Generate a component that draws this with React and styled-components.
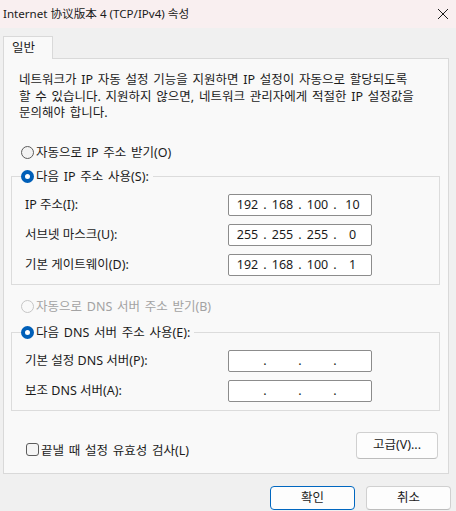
import React from 'react';
import styled, { createGlobalStyle } from 'styled-components';

const GlobalStyle = createGlobalStyle`
  html, body {
    margin: 0;
    padding: 0;
    background: #f0f0f0;
  }
  body {
    font-family: 'Noto Sans', 'Noto Sans CJK KR', 'Noto Sans CJK SC', sans-serif;
    font-size: 12.5px;
    color: #1b1b1b;
  }
`;

const ipRows = [
  { label: 'IP 주소(I):', value: ['192', '168', '100', '10'] },
  { label: '서브넷 마스크(U):', value: ['255', '255', '255', '0'] },
  { label: '기본 게이트웨이(D):', value: ['192', '168', '100', '1'] },
];

const dnsRows = [
  { label: '기본 설정 DNS 서버(P):', value: ['', '', '', ''] },
  { label: '보조 DNS 서버(A):', value: ['', '', '', ''] },
];

function IpField({ value }) {
  return (
    <IpBox>
      {value.map((octet, i) => (
        <React.Fragment key={i}>
          <Octet>{octet}</Octet>
          {i < 3 && <Dot>.</Dot>}
        </React.Fragment>
      ))}
    </IpBox>
  );
}

function Radio({ checked, disabled, children }) {
  return (
    <RadioRow $disabled={disabled}>
      <RadioDot $checked={checked} $disabled={disabled} />
      <span>{children}</span>
    </RadioRow>
  );
}

export default function App() {
  return (
    <>
      <GlobalStyle />
      <Window>
        <TitleBar>
          <Title>Internet 协议版本 4 (TCP/IPv4) 속성</Title>
          <CloseIcon width="12" height="12" viewBox="0 0 12 12">
            <path d="M1 1 L11 11 M11 1 L1 11" stroke="#1b1b1b" strokeWidth="1" fill="none" />
          </CloseIcon>
        </TitleBar>

        <Body>
          <Tab>일반</Tab>
          <Panel>
            <Description>
              네트워크가 IP 자동 설정 기능을 지원하면 IP 설정이 자동으로 할당되도록
              <br />
              할 수 있습니다. 지원하지 않으면, 네트워크 관리자에게 적절한 IP 설정값을
              <br />
              문의해야 합니다.
            </Description>

            <Standalone $top={23}>
              <Radio>자동으로 IP 주소 받기(O)</Radio>
            </Standalone>

            <Group $top={8}>
              <Legend>
                <Radio checked>다음 IP 주소 사용(S):</Radio>
              </Legend>
              <Rows>
                {ipRows.map(row => (
                  <FieldRow key={row.label}>
                    <FieldLabel>{row.label}</FieldLabel>
                    <IpField value={row.value} />
                  </FieldRow>
                ))}
              </Rows>
            </Group>

            <Standalone $top={14}>
              <Radio disabled>자동으로 DNS 서버 주소 받기(B)</Radio>
            </Standalone>

            <Group $top={10}>
              <Legend>
                <Radio checked>다음 DNS 서버 주소 사용(E):</Radio>
              </Legend>
              <Rows>
                {dnsRows.map(row => (
                  <FieldRow key={row.label}>
                    <FieldLabel>{row.label}</FieldLabel>
                    <IpField value={row.value} />
                  </FieldRow>
                ))}
              </Rows>
            </Group>

            <BottomRow>
              <CheckRow>
                <CheckBox />
                <span>끝낼 때 설정 유효성 검사(L)</span>
              </CheckRow>
              <Button $w={82} $h={27}>고급(V)...</Button>
            </BottomRow>
          </Panel>

          <Footer>
            <Button $w={85} $h={24} $primary>확인</Button>
            <Button $w={85} $h={24}>취소</Button>
          </Footer>
        </Body>
      </Window>
    </>
  );
}

const Window = styled.div`
  width: 456px;
  height: 511px;
  background: #f0f0f0;
  display: flex;
  flex-direction: column;
  overflow: hidden;
`;

const TitleBar = styled.div`
  height: 28px;
  background: #f9eff0;
  display: flex;
  align-items: center;
  justify-content: space-between;
  padding: 0 7px 0 3px;
  box-sizing: border-box;
`;

const Title = styled.div`
  font-size: 11.6px;
  line-height: 16px;
  color: #1b1b1b;
  white-space: nowrap;
`;

const CloseIcon = styled.svg`
  display: block;
  margin-top: -1px;
`;

const Body = styled.div`
  padding: 8px 0 0 3px;
`;

const Tab = styled.div`
  position: relative;
  z-index: 1;
  width: 50px;
  height: 23px;
  margin-bottom: -1px;
  box-sizing: border-box;
  border: 1px solid #d9d9d9;
  border-bottom: none;
  background: #f9f9f9;
  padding: 3px 0 0 8px;
  line-height: 16px;
`;

const Panel = styled.div`
  width: 446px;
  box-sizing: border-box;
  border: 1px solid #d9d9d9;
  background: #f9f9f9;
  padding: 13px 8px 14px 7px;
`;

const Description = styled.div`
  padding-left: 8px;
  line-height: 16.5px;
  word-spacing: 1.5px;
  white-space: nowrap;
`;

const Standalone = styled.div`
  margin-top: ${p => p.$top}px;
  padding-left: 10px;
`;

const RadioRow = styled.div`
  display: flex;
  align-items: center;
  gap: 2px;
  height: 16px;
  line-height: 16px;
  word-spacing: 1.5px;
  white-space: nowrap;
  color: ${p => (p.$disabled ? '#a3a3a3' : '#1b1b1b')};
`;

const RadioDot = styled.span`
  width: 13px;
  height: 13px;
  box-sizing: border-box;
  border-radius: 50%;
  flex: none;
  border: ${p =>
    p.$checked ? '4px solid #005fb8' : `1px solid ${p.$disabled ? '#c6c6c6' : '#5c5c5c'}`};
  background: ${p => (p.$checked ? '#ffffff' : p.$disabled ? '#f9f9f9' : '#f3f3f3')};
`;

const Group = styled.fieldset`
  margin: ${p => p.$top}px 0 0 0;
  min-width: 0;
  border: 1px solid #dcdcdc;
  padding: 0 0 8px 9px;
`;

const Legend = styled.legend`
  padding: 0 4px 0 0;
`;

const Rows = styled.div`
  display: flex;
  flex-direction: column;
  gap: 8px;
  padding-top: 9px;
  padding-left: 4px;
`;

const FieldRow = styled.div`
  display: flex;
  align-items: center;
  height: 22px;
`;

const FieldLabel = styled.div`
  width: 203px;
  line-height: 16px;
  white-space: nowrap;
`;

const IpBox = styled.div`
  width: 144px;
  height: 22px;
  box-sizing: border-box;
  border: 1px solid #8c8c8c;
  border-radius: 2px;
  background: #ffffff;
  display: flex;
  align-items: center;
  padding-left: 4px;
`;

const Octet = styled.span`
  width: 29px;
  text-align: center;
  line-height: 16px;
`;

const Dot = styled.span`
  width: 6px;
  text-align: center;
  line-height: 16px;
`;

const BottomRow = styled.div`
  margin-top: 21px;
  display: flex;
  align-items: flex-end;
  justify-content: space-between;
  padding: 0 2px 0 15px;
`;

const CheckRow = styled.div`
  display: flex;
  align-items: center;
  gap: 2px;
  height: 16px;
  margin-bottom: 1px;
  word-spacing: 1.5px;
  white-space: nowrap;
`;

const CheckBox = styled.span`
  width: 13px;
  height: 13px;
  box-sizing: border-box;
  border: 1px solid #5c5c5c;
  border-radius: 3px;
  background: #f5f5f5;
  flex: none;
`;

const Button = styled.div`
  width: ${p => p.$w}px;
  height: ${p => p.$h}px;
  box-sizing: border-box;
  border: 1px solid ${p => (p.$primary ? '#0067c0' : '#d0d0d0')};
  border-bottom-color: ${p => (p.$primary ? '#0067c0' : '#bdbdbd')};
  border-radius: 4px;
  background: #fdfdfd;
  display: flex;
  align-items: center;
  justify-content: center;
  line-height: 16px;
  white-space: nowrap;
`;

const Footer = styled.div`
  display: flex;
  justify-content: flex-end;
  gap: 11px;
  margin-top: 12px;
  padding-right: 5px;
`;
